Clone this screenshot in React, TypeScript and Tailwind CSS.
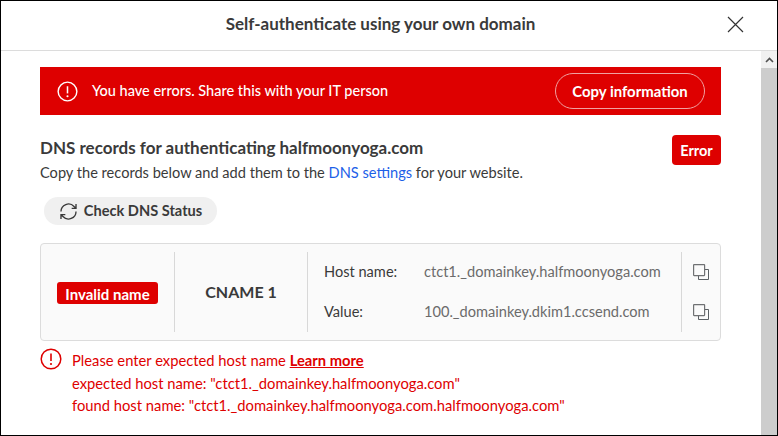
import React from "react";

const Copy = () => (
  <svg width="16" height="16" viewBox="0 0 16 16" fill="none" className="shrink-0">
    <path d="M5.5 5.5h10v10h-10z" stroke="#5a5f63" strokeWidth="1" />
    <rect x="0.6" y="0.6" width="11" height="11" rx="0.5" fill="#fafafa" stroke="#6f7173" strokeWidth="1.2" />
  </svg>
);

const Alert = ({ color, size }: { color: string; size: number }) => (
  <svg width={size} height={size} viewBox="0 0 22 22" fill="none" className="shrink-0">
    <circle cx="11" cy="11" r="9.8" stroke={color} strokeWidth="1.5" />
    <path d="M11 5.5v7.5" stroke={color} strokeWidth="1.6" />
    <circle cx="11" cy="16" r="1.1" fill={color} />
  </svg>
);

export default function App() {
  return (
    <div className="w-[778px] h-[436px] overflow-hidden bg-white border border-black flex flex-col text-[#3a3a3a] font-['Lato','Inter',sans-serif] text-[14.6px]">
      <header className="h-[50px] shrink-0 border-b border-[#dcdcdc] flex items-center relative pr-[17px] pb-[3px]">
        <h1 className="w-full text-center font-bold text-[17px] leading-[24px]">Self-authenticate using your own domain</h1>
        <svg className="absolute right-[33px] top-[15px]" width="17" height="17" viewBox="0 0 17 17" fill="none">
          <path d="M1 1l15 15M16 1L1 16" stroke="#333" strokeWidth="1.2" />
        </svg>
      </header>
      <div className="flex flex-1 min-h-0">
        <main className="flex-1 pt-[16px] pl-[39px] pr-[40px] flex flex-col">
          <div className="h-[48px] bg-[#de0000] flex items-center justify-between pl-[17px] pr-[16px] text-white">
            <div className="flex items-center gap-[14px]">
              <Alert color="#fff" size={21} />
              <span className="font-medium text-[14.5px]">You have errors. Share this with your IT person</span>
            </div>
            <button className="h-[36px] w-[150px] rounded-full border border-[#f0a0a0] font-bold text-[14.9px]">Copy information</button>
          </div>
          <div className="flex justify-between mt-[21px]">
            <div>
              <h2 className="font-bold text-[17px] leading-[24px]">DNS records for authenticating halfmoonyoga.com</h2>
              <p className="leading-[20px] mt-[3px]">
                Copy the records below and add them to the <span className="text-[#1d5fe8]">DNS settings</span> for your website.
              </p>
            </div>
            <span className="h-[30px] w-[49px] -mt-[1px] pt-[1px] bg-[#de0000] rounded-[4px] text-white font-bold flex items-center justify-center text-[14.5px]">Error</span>
          </div>
          <button className="self-start ml-[4px] mt-[14px] h-[28px] w-[173px] rounded-full bg-[#f0f0f0] flex items-center justify-center gap-[6px] font-bold">
            <svg width="19" height="19" viewBox="0 0 24 24" fill="none" stroke="#3a3a3a" strokeWidth="1.7">
              <path d="M2.5 12a9.5 9.5 0 0 1 16.5-6.4L21.5 8M21.5 2.5V8H16M21.5 12A9.5 9.5 0 0 1 5 18.4L2.5 16M2.5 21.5V16H8" />
            </svg>
            Check DNS Status
          </button>
          <section className="mt-[18px] h-[98px] rounded-[4px] border border-[#dcdcdc] bg-[#fafafa] flex items-center">
            <div className="w-[134px] h-[80px] border-r border-[#d8d8d8] flex items-center justify-center">
              <span className="h-[22px] w-[101px] pt-[2px] rounded-[3px] bg-[#de0000] mt-[2px] text-white font-bold flex items-center justify-center text-[15px]">Invalid name</span>
            </div>
            <div className="w-[133px] h-[80px] border-r border-[#d8d8d8] flex items-center justify-center font-bold text-[16px]">CNAME 1</div>
            <div className="flex-1 h-[80px] pl-[16px] pt-[1px] flex flex-col gap-[2px]">
              <div className="flex h-[38px] items-center"><span className="w-[100px]">Host name:</span><span className="text-[#6b6b6b]">ctct1._domainkey.halfmoonyoga.com</span></div>
              <div className="flex h-[38px] items-center"><span className="w-[100px]">Value:</span><span className="text-[#6b6b6b]">100._domainkey.dkim1.ccsend.com</span></div>
            </div>
            <div className="w-[39px] h-[80px] border-l border-[#d8d8d8] flex flex-col items-center gap-[24px] pt-[12px]">
              <Copy />
              <Copy />
            </div>
          </section>
          <div className="flex gap-[10px] mt-[7px] text-[#de0000]">
            <Alert color="#de0000" size={22} />
            <div className="leading-[22.5px] pt-[1px] text-[14.75px]">
              <div>Please enter expected host name <a className="font-bold underline">Learn more</a></div>
              <div>expected host name: "ctct1._domainkey.halfmoonyoga.com"</div>
              <div>found host name: "ctct1._domainkey.halfmoonyoga.com.halfmoonyoga.com"</div>
            </div>
          </div>
        </main>
        <aside className="w-[16px] shrink-0 bg-[#cdcdcd] flex flex-col">
          <div className="h-[17px] bg-[#f1f1f1] flex items-center justify-center">
            <svg width="9" height="6" viewBox="0 0 9 6" fill="none"><path d="M1 5l3.5-3.5L8 5" stroke="#505050" strokeWidth="1.6" /></svg>
          </div>
        </aside>
      </div>
    </div>
  );
}
